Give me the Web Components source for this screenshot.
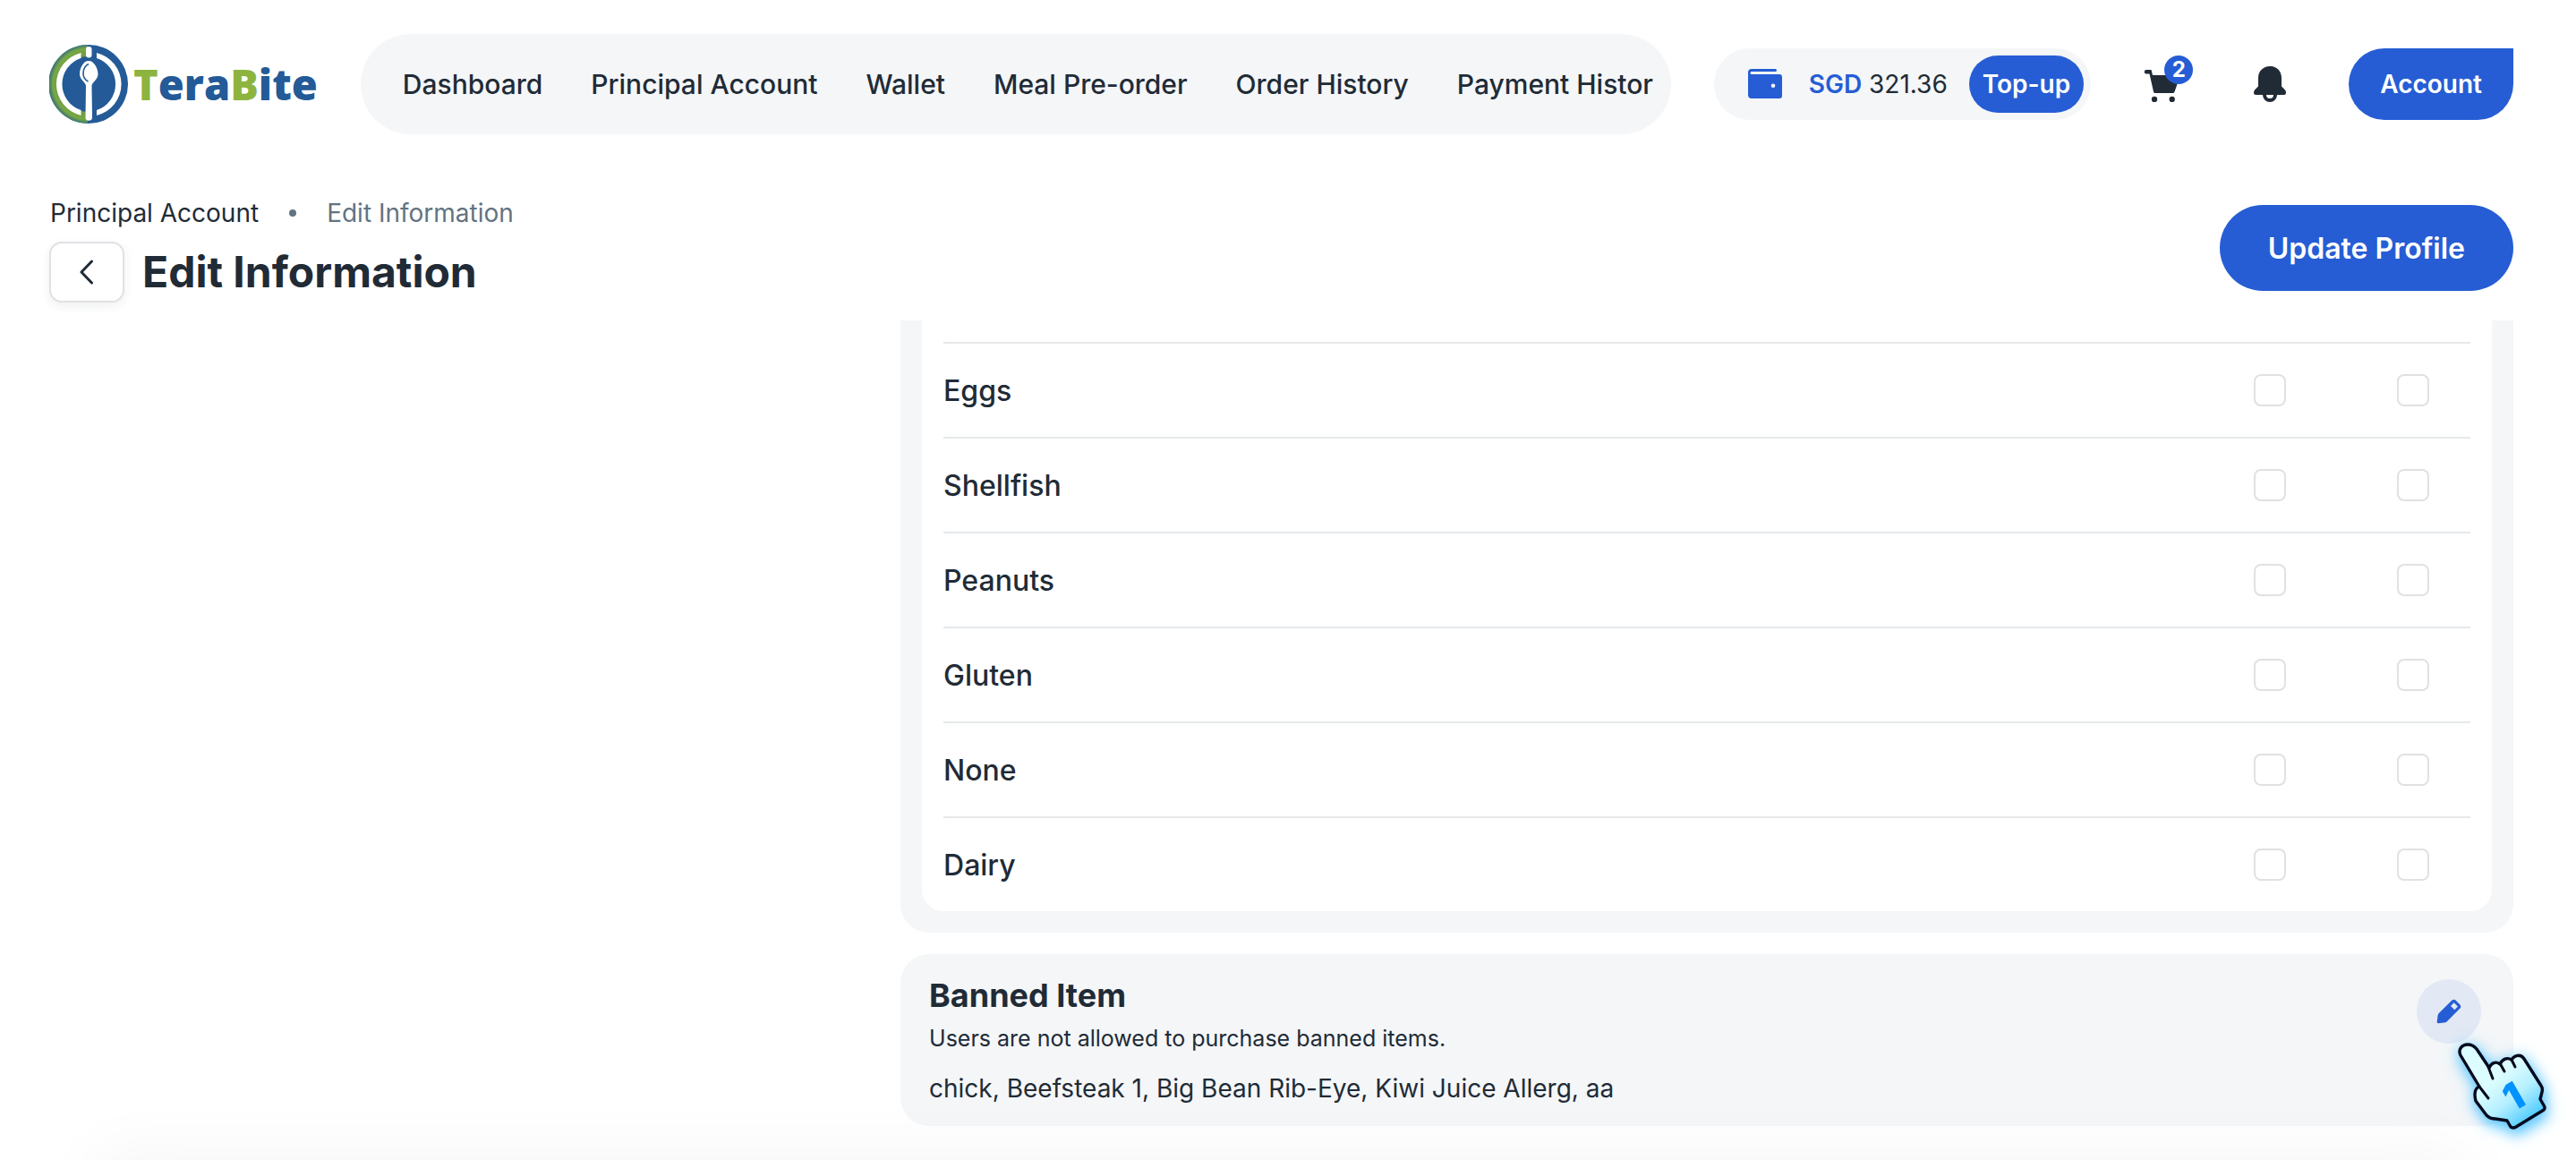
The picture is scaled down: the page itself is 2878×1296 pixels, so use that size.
<!DOCTYPE html>
<html lang="en">
<head>
<meta charset="UTF-8">
<meta name="viewport" content="width=device-width, initial-scale=1.0">
<title>TeraBite - Edit Information</title>
<style>
    :root {
        --blue: #265dd5;
        --ink: #212b36;
        --muted: #637381;
        --panel: #f4f6f8;
        --line: #e5e8eb;
    }
    body {
        margin: 0;
        background: #fff;
        color: var(--ink);
        font-family: Inter, "Liberation Sans", sans-serif;
        font-size: 28px;
    }
</style>
</head>
<body>
<tera-app></tera-app>

<script>
const BASE = `
    * { box-sizing: border-box; }
    a { color: inherit; text-decoration: none; }
    button { font: inherit; border: 0; margin: 0; padding: 0; cursor: pointer; color: inherit; background: none; }
    svg { display: block; flex: none; }
`;

class BrandLogo extends HTMLElement {
    constructor() {
        super();
        this.attachShadow({ mode: 'open' });
    }

    connectedCallback() {
        this.shadowRoot.innerHTML = `
            <style>${BASE}
                :host { display: block; flex: none; }
                a { display: flex; align-items: center; gap: 6px; color: #235a97; font: 800 47px/72px "Open Sans", sans-serif; }
                b { color: #8cb43f; font-weight: 800; }
            </style>
            <a href="#">
                <svg width="88" height="88" viewBox="0 0 88 88" aria-hidden="true">
                    <defs>
                        <radialGradient id="rim" gradientUnits="userSpaceOnUse" cx="44" cy="44" r="44">
                            <stop offset=".8" stop-color="#6f9f43"/>
                            <stop offset=".9" stop-color="#7aa843"/>
                            <stop offset="1" stop-color="#3f7a72"/>
                        </radialGradient>
                        <linearGradient id="fade" gradientUnits="userSpaceOnUse" x1="30" y1="0" x2="43" y2="0">
                            <stop offset="0" stop-color="#235a97" stop-opacity="0"/>
                            <stop offset="1" stop-color="#235a97"/>
                        </linearGradient>
                    </defs>
                    <circle cx="44" cy="44" r="44" fill="#235a97"/>
                    <path d="M43 0A44 44 0 0 0 43 88Z" fill="url(#rim)"/>
                    <path d="M30 0H44V88H30Z" fill="url(#fade)" clip-path="circle(44px at 44px 44px)"/>
                    <circle cx="44" cy="44" r="31" fill="#235a97"/>
                    <path d="M35.500 9A36 36 0 0 0 35.500 79V73A30.500 30.500 0 0 1 35.500 15Z" fill="#fff"/>
                    <path d="M53 9A36 36 0 0 1 53 79V73A30.500 30.500 0 0 0 53 15Z" fill="#fff"/>
                    <rect x="41" y="2" width="6.500" height="12.500" rx="3.200" fill="#fff"/>
                    <path d="M44 18C50 18 54.500 26 54.500 33C54.500 39 47.500 42 47.500 46L48 81A3.600 3.600 0 0 1 40.500 81L41 46C41 42 34 39 34 33C34 26 38 18 44 18Z" fill="#fff"/>
                    <path d="M44 21.500C38 24 34.500 36 43.500 41" fill="none" stroke="#235a97" stroke-width="1.600"/>
                </svg>
                <span><b>T</b>era<b>B</b>ite</span>
            </a>`;
    }
}
customElements.define('brand-logo', BrandLogo);

class NavPill extends HTMLElement {
    constructor() {
        super();
        this.attachShadow({ mode: 'open' });
    }

    connectedCallback() {
        const items = ['Dashboard', 'Principal Account', 'Wallet', 'Meal Pre-order', 'Order History', 'Payment History'];

        this.shadowRoot.innerHTML = `
            <style>${BASE}
                :host { display: block; flex: 1; min-width: 0; padding: 0 20px; border-radius: 56px; background: var(--panel); }
                nav { display: flex; overflow: hidden; font-size: 30px; line-height: 112px; font-weight: 500; white-space: nowrap; }
                a { flex: none; padding: 0 27px; }
            </style>
            <nav>${items.map(item => `<a href="#">${item}</a>`).join('')}</nav>`;
    }
}
customElements.define('nav-pill', NavPill);

class WalletBalance extends HTMLElement {
    constructor() {
        super();
        this.attachShadow({ mode: 'open' });
    }

    connectedCallback() {
        this.shadowRoot.innerHTML = `
            <style>${BASE}
                :host { display: flex; flex: none; align-items: center; height: 80px; padding: 0 8px 0 38px; border-radius: 40px; background: var(--panel); white-space: nowrap; }
                .amount { margin: 0 24px 0 30px; }
                .amount b { color: var(--blue); font-weight: 600; }
                button { height: 64px; padding: 0 15px; border-radius: 32px; background: var(--blue); color: #fff; font-weight: 600; }
            </style>
            <svg width="38" height="34" viewBox="0 0 38 34" aria-hidden="true">
                <path fill="var(--blue)" fill-rule="evenodd" d="M4 0H30.500A1.500 1.500 0 0 1 30.500 3H4A1.500 1.500 0 0 0 4 6H35A3 3 0 0 1 38 9V30A3 3 0 0 1 35 33H4A4 4 0 0 1 0 29V4A4 4 0 0 1 4 0ZM28 16.400A2.300 2.300 0 1 0 28 21A2.300 2.300 0 1 0 28 16.400Z"/>
            </svg>
            <span class="amount"><b>${this.getAttribute('currency')}</b> ${this.getAttribute('amount')}</span>
            <button type="button">Top-up</button>`;
    }
}
customElements.define('wallet-balance', WalletBalance);

class IconButton extends HTMLElement {
    constructor() {
        super();
        this.attachShadow({ mode: 'open' });
    }

    connectedCallback() {
        const count = this.getAttribute('count');

        this.shadowRoot.innerHTML = `
            <style>${BASE}
                :host { display: block; flex: none; position: relative; }
                button { display: grid; place-items: center; width: 72px; height: 72px; border-radius: 50%; }
                .badge { position: absolute; top: 4px; right: 4px; min-width: 32px; height: 32px; border-radius: 16px; background: var(--blue); color: #fff; font-size: 24px; font-weight: 700; line-height: 32px; text-align: center; }
            </style>
            <button type="button" aria-label="${this.getAttribute('label')}"><slot></slot></button>
            ${count ? `<span class="badge">${count}</span>` : ''}`;
    }
}
customElements.define('icon-button', IconButton);

class SiteHeader extends HTMLElement {
    constructor() {
        super();
        this.attachShadow({ mode: 'open' });
    }

    connectedCallback() {
        this.shadowRoot.innerHTML = `
            <style>${BASE}
                :host { display: block; }
                header { display: flex; align-items: center; gap: 48px; }
                .tools { display: flex; flex: none; align-items: center; gap: 46px; }
                .account { height: 80px; margin-left: 6px; padding: 0 35px; border-radius: 40px 0 40px 40px; background: var(--blue); color: #fff; font-weight: 600; }
            </style>
            <header>
                <brand-logo></brand-logo>
                <nav-pill></nav-pill>
                <div class="tools">
                    <wallet-balance currency="SGD" amount="321.36"></wallet-balance>
                    <icon-button label="Cart" count="2">
                        <svg width="48" height="40" viewBox="0 0 48 40" fill="currentColor" aria-hidden="true">
                            <path d="M4 4H9.500L11 10H42L35.500 28.500Q35 30 33.500 30H14Q12.300 30 12 28.500L7.500 8.500H4A2.200 2.200 0 0 1 4 4Z"/>
                            <circle cx="13" cy="37" r="3.200"/>
                            <circle cx="32.700" cy="37" r="3.200"/>
                        </svg>
                    </icon-button>
                    <icon-button label="Notifications">
                        <svg width="40" height="40" viewBox="0 0 40 40" fill="currentColor" aria-hidden="true">
                            <path d="M20 0C27.500 0 33 5.500 33 13V22.500L37 26.500Q38 28 38 29.500Q38 32 35.500 32H4.500Q2 32 2 29.500Q2 28 3 26.500L7 22.500V13C7 5.500 12.500 0 20 0Z"/>
                            <path d="M14 31V32A6 6 0 0 0 26 32V31" fill="none" stroke="currentColor" stroke-width="4"/>
                        </svg>
                    </icon-button>
                    <button class="account" type="button">Account</button>
                </div>
            </header>`;
    }
}
customElements.define('site-header', SiteHeader);

class PageHeading extends HTMLElement {
    constructor() {
        super();
        this.attachShadow({ mode: 'open' });
    }

    connectedCallback() {
        const title = this.getAttribute('heading');
        const parent = this.getAttribute('parent');

        this.shadowRoot.innerHTML = `
            <style>${BASE}
                :host { display: flex; align-items: center; justify-content: space-between; padding: 66px 0 20px; }
                ol { display: flex; align-items: center; gap: 34px; margin: 0 0 10px; padding: 0 1px; list-style: none; line-height: 44px; }
                .dot { width: 8px; height: 8px; border-radius: 50%; background: var(--muted); }
                .current { color: var(--muted); }
                .title { display: flex; align-items: center; gap: 20px; }
                .back { display: grid; place-items: center; width: 84px; height: 68px; border: 2px solid #dfe1e4; border-radius: 14px; background: #fff; box-shadow: 0 4px 12px rgba(33, 43, 54, .07); }
                h1 { margin: 0; font-size: 48px; line-height: 68px; font-weight: 700; }
            </style>
            <div>
                <ol>
                    <li><a href="#">${parent}</a></li>
                    <li class="dot" aria-hidden="true"></li>
                    <li class="current">${title}</li>
                </ol>
                <div class="title">
                    <button class="back" type="button" aria-label="Back">
                        <svg width="28" height="28" viewBox="0 0 28 28" aria-hidden="true">
                            <path d="M19.500 2L8 14L19.500 26" fill="none" stroke="currentColor" stroke-width="3" stroke-linecap="round" stroke-linejoin="round"/>
                        </svg>
                    </button>
                    <h1>${title}</h1>
                </div>
            </div>
            <slot></slot>`;
    }
}
customElements.define('page-heading', PageHeading);

class PrimaryButton extends HTMLElement {
    constructor() {
        super();
        this.attachShadow({ mode: 'open' });
    }

    connectedCallback() {
        this.shadowRoot.innerHTML = `
            <style>${BASE}
                :host { display: block; }
                button { height: 96px; padding: 0 54px; border-radius: 48px; background: var(--blue); color: #fff; font-size: 32px; font-weight: 600; }
            </style>
            <button type="button"><slot></slot></button>`;
    }
}
customElements.define('primary-button', PrimaryButton);

class AllergyTable extends HTMLElement {
    constructor() {
        super();
        this.attachShadow({ mode: 'open' });
    }

    connectedCallback() {
        const rows = ['Eggs', 'Shellfish', 'Peanuts', 'Gluten', 'None', 'Dairy'];

        const rowTemplate = name => `
            <tr>
                <th scope="row">${name}</th>
                <td class="allergy"><input type="checkbox" aria-label="${name} allergy"></td>
                <td class="restrict"><input type="checkbox" aria-label="${name} restriction"></td>
            </tr>`;

        this.shadowRoot.innerHTML = `
            <style>${BASE}
                :host { display: block; padding: 0 24px 24px; border-radius: 0 0 32px 32px; background: var(--panel); }
                .sheet { padding: 24px 24px 0; border-radius: 0 0 24px 24px; background: #fff; }
                table { width: 100%; border-collapse: separate; border-spacing: 0; }
                th, td { height: 106px; padding: 0; border-top: 2px solid var(--line); }
                th { text-align: left; font-size: 32px; font-weight: 500; }
                td { text-align: center; }
                .allergy { width: 192px; }
                .restrict { width: 128px; }
                input { display: block; appearance: none; width: 36px; height: 36px; margin: 0 auto; border: 2px solid #e1e1e1; border-radius: 8px; background: #fff; }
                input:checked { border-color: var(--blue); background: var(--blue); }
            </style>
            <div class="sheet">
                <table><tbody>${rows.map(rowTemplate).join('')}</tbody></table>
            </div>`;
    }
}
customElements.define('allergy-table', AllergyTable);

class BannedCard extends HTMLElement {
    constructor() {
        super();
        this.attachShadow({ mode: 'open' });
    }

    connectedCallback() {
        const items = ['chick', 'Beefsteak 1', 'Big Bean Rib-Eye', 'Kiwi Juice Allerg', 'aa'];

        this.shadowRoot.innerHTML = `
            <style>${BASE}
                :host { display: flex; align-items: flex-start; justify-content: space-between; padding: 20px 36px 18px 32px; border-radius: 32px; background: var(--panel); }
                h2 { margin: 0; font-size: 36px; line-height: 52px; font-weight: 700; }
                p { margin: 0; line-height: 44px; }
                .hint { font-size: 25px; }
                .items { margin-top: 10px; line-height: 48px; }
                button { display: grid; place-items: center; width: 72px; height: 72px; margin-top: 8px; border-radius: 50%; background: #e2e8f4; color: var(--blue); }
            </style>
            <section>
                <h2>Banned Item</h2>
                <p class="hint">Users are not allowed to purchase banned items.</p>
                <p class="items">${items.join(', ')}</p>
            </section>
            <button type="button" aria-label="Edit banned items">
                <svg width="28" height="28" viewBox="0 0 28 28" fill="currentColor" aria-hidden="true">
                    <path fill-rule="evenodd" d="M17.500 1.500Q19.500 0 21.500 1.500L26.500 6.500Q28 8.500 26.500 10.500L11.500 25.500Q10.500 26.500 9 26.600L2 27.200Q.600 27.200 .700 25.800L1.600 18.500Q1.800 17 2.800 16ZM19.700 4.300L16 8L20.300 12.300L24 8.600Z"/>
                </svg>
            </button>`;
    }
}
customElements.define('banned-card', BannedCard);

class HandPointer extends HTMLElement {
    constructor() {
        super();
        this.attachShadow({ mode: 'open' });
    }

    connectedCallback() {
        this.shadowRoot.innerHTML = `
            <style>${BASE}
                :host { display: block; pointer-events: none; }
                svg { overflow: visible; filter: drop-shadow(2px 6px 8px rgba(40, 180, 255, .75)) drop-shadow(0 0 8px rgba(90, 200, 255, .35)); }
                text { font: 900 42px Inter, sans-serif; }
            </style>
            <svg width="110" height="106" viewBox="0 0 110 106" aria-hidden="true">
                <defs>
                    <linearGradient id="glove" gradientUnits="userSpaceOnUse" x1="45" y1="48" x2="86" y2="98">
                        <stop offset="0" stop-color="#dcfdff"/>
                        <stop offset=".45" stop-color="#b5efff"/>
                        <stop offset="1" stop-color="#3fc6ff"/>
                    </linearGradient>
                </defs>
                <path d="M17 7C10 7 6 13 9 19L30 54C25 56 24 62 26 70L38 86Q42 90 48 90L61 92L65 99Q68 101 71 99L102 80Q104 78 102 75L98 68L100 60Q101 56 99 53L80 23C76 17 69 19 66 24C61 21 56 23 53 29C48 25 43 28 41 33L27 12Q23 7 17 7Z" fill="url(#glove)" stroke="#060a1e" stroke-width="3.400" stroke-linejoin="round"/>
                <path d="M40 32L45 45M53 28L58 37M66 24L70 32M30 54L40 67" fill="none" stroke="#060a1e" stroke-width="3" stroke-linecap="round"/>
                <text x="68" y="80" text-anchor="middle" fill="#0092ff" transform="rotate(-30 68 65)">1</text>
            </svg>`;
    }
}
customElements.define('hand-pointer', HandPointer);

class TeraApp extends HTMLElement {
    constructor() {
        super();
        this.attachShadow({ mode: 'open' });
    }

    connectedCallback() {
        this.shadowRoot.innerHTML = `
            <style>${BASE}
                :host { display: flex; flex-direction: column; height: 100vh; padding: 38px 70px 0 55px; box-sizing: border-box; overflow: hidden; }
                main { display: grid; flex: 1; grid-template-columns: minmax(0, 19fr) minmax(0, 36fr); min-height: 0; }
                .cards { display: flex; grid-column: 2; flex-direction: column; gap: 24px; }
                .edit { position: relative; }
                hand-pointer { position: absolute; right: -42px; top: 94px; }
                /* soft shadow cast upwards by the bar under the fold */
                .fold { position: fixed; top: 100%; left: 110px; right: 124px; height: 80px; box-shadow: 0 0 80px rgba(0, 0, 0, .05); }
            </style>
            <site-header></site-header>
            <page-heading parent="Principal Account" heading="Edit Information">
                <primary-button>Update Profile</primary-button>
            </page-heading>
            <main>
                <div class="cards">
                    <allergy-table></allergy-table>
                    <div class="edit">
                        <banned-card></banned-card>
                        <hand-pointer></hand-pointer>
                    </div>
                </div>
            </main>
            <div class="fold"></div>`;
    }
}
customElements.define('tera-app', TeraApp);
</script>
</body>
</html>
